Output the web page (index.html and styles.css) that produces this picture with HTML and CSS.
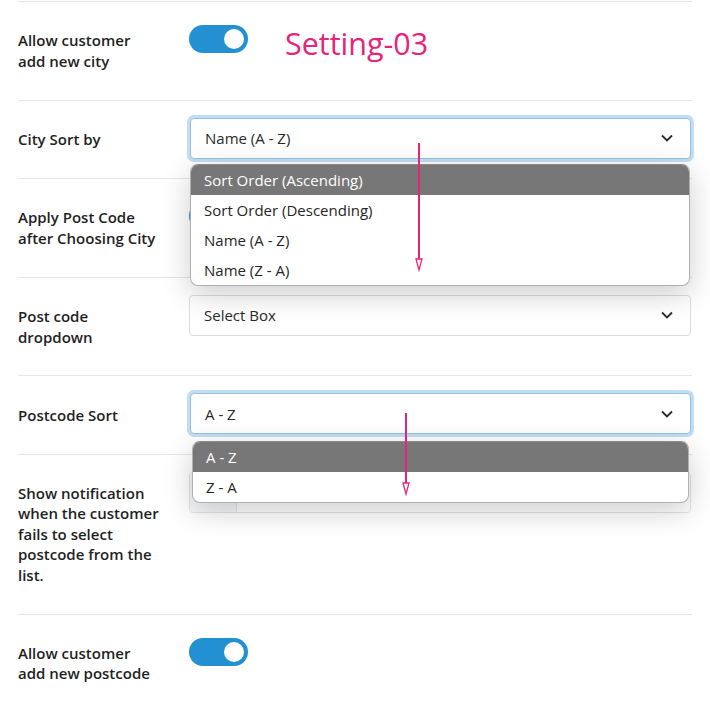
FILE: index.html
```html
<!DOCTYPE html>
<html>
<head>
<meta charset="utf-8">
<link rel="stylesheet" href="styles.css">
</head>
<body>
<div class="settings">
  <div class="row">
    <div class="label">Allow customer<br>add new city</div>
    <div class="control inline">
      <span class="toggle"><span class="knob"></span></span>
      <span class="tag">Setting-03</span>
    </div>
  </div>
  <div class="row">
    <div class="label">City Sort by</div>
    <div class="control">
      <div class="select focus">Name (A - Z)
        <svg class="chev" width="12" height="8" viewBox="0 0 12 8"><path d="M1 1.5 L6 6.5 L11 1.5" fill="none" stroke="#2a2a2a" stroke-width="1.8"/></svg>
      </div>
      <ul class="menu menu-city">
        <li class="active">Sort Order (Ascending)</li>
        <li>Sort Order (Descending)</li>
        <li>Name (A - Z)</li>
        <li>Name (Z - A)</li>
      </ul>
    </div>
  </div>
  <div class="row">
    <div class="label">Apply Post Code<br>after Choosing City</div>
    <div class="control">
      <span class="toggle"><span class="knob"></span></span>
    </div>
  </div>
  <div class="row">
    <div class="label">Post code<br>dropdown</div>
    <div class="control">
      <div class="select">Select Box
        <svg class="chev" width="12" height="8" viewBox="0 0 12 8"><path d="M1 1.5 L6 6.5 L11 1.5" fill="none" stroke="#2a2a2a" stroke-width="1.8"/></svg>
      </div>
    </div>
  </div>
  <div class="row">
    <div class="label">Postcode Sort</div>
    <div class="control">
      <div class="select focus">A - Z
        <svg class="chev" width="12" height="8" viewBox="0 0 12 8"><path d="M1 1.5 L6 6.5 L11 1.5" fill="none" stroke="#2a2a2a" stroke-width="1.8"/></svg>
      </div>
      <ul class="menu menu-post">
        <li class="active">A - Z</li>
        <li>Z - A</li>
      </ul>
    </div>
  </div>
  <div class="row">
    <div class="label">Show notification<br>when the customer<br>fails to select<br>postcode from the<br>list.</div>
    <div class="control">
      <div class="group"><span class="addon"></span><span class="field"></span></div>
    </div>
  </div>
  <div class="row">
    <div class="label">Allow customer<br>add new postcode</div>
    <div class="control">
      <span class="toggle"><span class="knob"></span></span>
    </div>
  </div>
</div>
<svg class="notes" width="710" height="710" viewBox="0 0 710 710">
  <line x1="419" y1="143" x2="419" y2="262" stroke="#e8247a" stroke-width="2"/>
  <polygon points="416,259 422,259 419,270" fill="#fff" stroke="#e8247a" stroke-width="1.3"/>
  <line x1="406" y1="413" x2="406" y2="486" stroke="#e8247a" stroke-width="2"/>
  <polygon points="403,483 409,483 406,494" fill="#fff" stroke="#e8247a" stroke-width="1.3"/>
</svg>
</body>
</html>
```
FILE: styles.css
```css
html, body {
  margin: 0;
  padding: 0;
  background: #fff;
}
body {
  font-family: "Open Sans", "Liberation Sans", sans-serif;
  color: #222;
  position: relative;
  width: 710px;
  height: 710px;
  overflow: hidden;
}
.settings {
  margin: 1px 0 0 18px;
  width: 674px;
}
.row {
  display: grid;
  grid-template-columns: 171px 1fr;
  border-top: 1px solid #e6e6e6;
}
.label {
  padding: 28.45px 0;
  font-size: 15px;
  font-weight: 600;
  line-height: 20.4px;
  color: #1f1f1f;
  align-self: center;
}
.control {
  position: relative;
  align-self: start;
  padding-top: 17px;
}
.control.inline {
  display: flex;
  align-items: flex-start;
}
.toggle {
  display: block;
  margin-top: 6px;
  width: 59px;
  height: 28px;
  border-radius: 14px;
  background: #2391d1;
  position: relative;
}
.knob {
  position: absolute;
  right: 4px;
  top: 4px;
  width: 20px;
  height: 20px;
  border-radius: 50%;
  background: #fff;
}
.tag {
  margin: 3px 0 0 37px;
  font-size: 30.5px;
  line-height: normal;
  color: #e8247a;
}
.select {
  box-sizing: border-box;
  height: 41px;
  margin-right: 1px;
  border: 1px solid #dcdcdc;
  border-radius: 4px;
  display: flex;
  align-items: center;
  justify-content: space-between;
  padding: 0 17px 0 14px;
  font-size: 15px;
  color: #2a2a2a;
  background: #fff;
}
.select.focus {
  margin-left: 1px;
  border-color: #8ec3e7;
  box-shadow: 0 0 0 3px #c4def1;
}
.chev {
  display: block;
}
.menu {
  position: absolute;
  z-index: 5;
  list-style: none;
  margin: 0;
  padding: 0;
  background: #fff;
  border: 1px solid #b0b0b0;
  border-top-color: #8a8a8a;
  border-radius: 8px;
  overflow: hidden;
  box-shadow: 0 8px 30px rgba(0, 0, 0, 0.2);
}
.menu li {
  height: 30px;
  line-height: 30px;
  padding-left: 13px;
  font-size: 15px;
  color: #262626;
}
.menu li.active {
  background: #777;
  color: #fff;
}
.menu-city {
  top: 63px;
  left: 1px;
  width: 498px;
}
.menu-post {
  top: 65px;
  left: 3px;
  width: 495px;
}
.group {
  display: flex;
  height: 41px;
  box-sizing: border-box;
  border: 1px solid #e3e3e3;
  border-radius: 4px;
  margin-right: 1px;
  overflow: hidden;
}
.addon {
  width: 46px;
  background: #f5f7f9;
  border-right: 1px solid #e3e3e3;
}
.field {
  flex: 1;
  background: #fff;
}
.notes {
  position: absolute;
  left: 0;
  top: 0;
  pointer-events: none;
  z-index: 10;
}
```
